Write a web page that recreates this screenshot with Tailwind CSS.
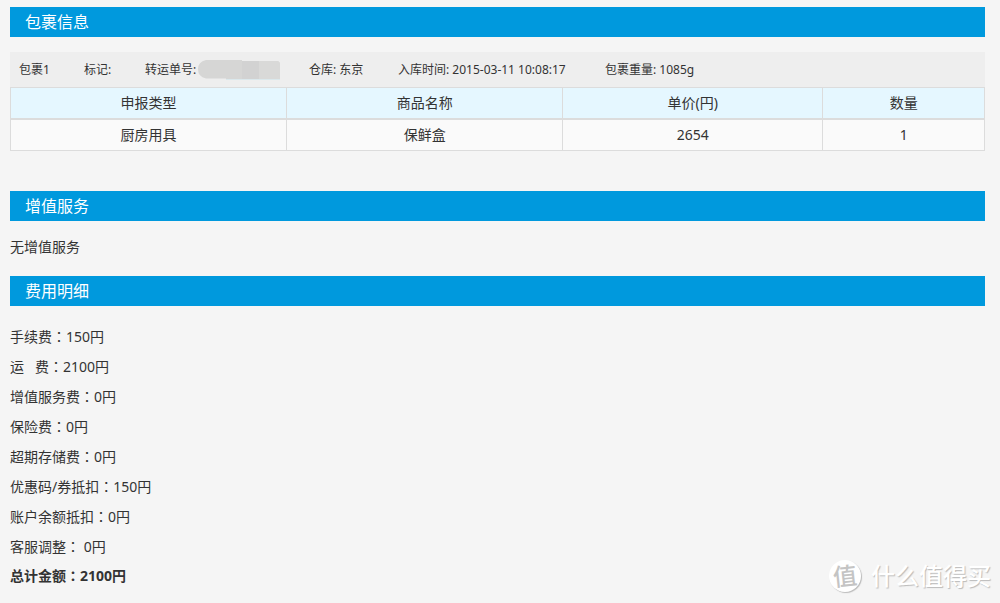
<!DOCTYPE html>
<html lang="zh-CN">
<head>
<meta charset="utf-8">
<meta name="viewport" content="width=device-width, initial-scale=1">
<title>包裹信息</title>
<script src="https://cdn.jsdelivr.net/npm/@tailwindcss/browser@4"></script>
</head>
<body class="relative min-h-screen bg-[#f5f5f5] pt-[7px] pr-[15px] pl-[10px] font-['Noto_Sans','Noto_Sans_CJK_SC',sans-serif] text-sm text-[#333]">
<main>
  <section>
    <h2 class="h-[30px] bg-[#0099dd] pl-[15px] text-base leading-[30px] text-white">包裹信息</h2>
    <div class="mt-[15px] flex h-[35px] items-center bg-[#eee] pl-[9px] text-xs whitespace-nowrap">
      <span class="w-[65px]">包裹1</span>
      <span class="w-[61px]">标记:</span>
      <span class="flex w-[164px] items-center">转运单号:
        <svg class="ml-[2px] h-[21px] w-[83px]" viewBox="0 0 83 21" aria-hidden="true"><path d="M8 1H44V2H80L82 4V20H28V19.500H8Q0 18 0 10Q0 3 8 1Z" fill="#d6d6d5"/><path d="M44 2h17v18H44z" fill="#d2d2d2"/><path d="M61 2h19l2 2v16H61z" fill="#d9d9d8"/><path d="M28 20.500H82" stroke="#dbe8ec"/></svg>
      </span>
      <span class="w-[89px]">仓库: 东京</span>
      <span class="w-[207px]">入库时间: 2015-03-11 10:08:17</span>
      <span>包裹重量: 1085g</span>
    </div>
    <table class="w-full table-fixed border-collapse border border-[#dcdcdc] text-center">
      <colgroup><col class="w-[28.35%]"><col class="w-[28.35%]"><col class="w-[26.7%]"><col></colgroup>
      <thead>
        <tr class="h-[31px] border-b-2 border-[#dcdcdc] bg-[#e5f7ff]">
          <th class="border-r border-[#dcdcdc] font-normal">申报类型</th>
          <th class="border-r border-[#dcdcdc] font-normal">商品名称</th>
          <th class="border-r border-[#dcdcdc] font-normal">单价(円)</th>
          <th class="font-normal">数量</th>
        </tr>
      </thead>
      <tbody>
        <tr class="h-8 bg-[#fafafa]">
          <td class="border-r border-[#dcdcdc]">厨房用具</td>
          <td class="border-r border-[#dcdcdc]">保鲜盒</td>
          <td class="border-r border-[#dcdcdc]">2654</td>
          <td>1</td>
        </tr>
      </tbody>
    </table>
  </section>
  <section class="mt-10">
    <h2 class="h-[30px] bg-[#0099dd] pl-[15px] text-base leading-[30px] text-white">增值服务</h2>
    <p class="h-[55px] leading-[52px]">无增值服务</p>
  </section>
  <section>
    <h2 class="h-[30px] bg-[#0099dd] pl-[15px] text-base leading-[30px] text-white">费用明细</h2>
    <ul class="mt-[15px] leading-[30px]">
      <li class="h-[30px]">手续费<span lang="zh-TW" class="font-['Noto_Sans_CJK_TC']">：</span>150円</li>
      <li class="h-[30px] whitespace-pre">运   费<span lang="zh-TW" class="font-['Noto_Sans_CJK_TC']">：</span>2100円</li>
      <li class="h-[30px]">增值服务费<span lang="zh-TW" class="font-['Noto_Sans_CJK_TC']">：</span>0円</li>
      <li class="h-[30px]">保险费<span lang="zh-TW" class="font-['Noto_Sans_CJK_TC']">：</span>0円</li>
      <li class="h-[30px]">超期存储费<span lang="zh-TW" class="font-['Noto_Sans_CJK_TC']">：</span>0円</li>
      <li class="h-[30px]">优惠码/券抵扣<span lang="zh-TW" class="font-['Noto_Sans_CJK_TC']">：</span>150円</li>
      <li class="h-[30px]">账户余额抵扣<span lang="zh-TW" class="font-['Noto_Sans_CJK_TC']">：</span>0円</li>
      <li class="h-[30px]">客服调整<span lang="zh-TW" class="font-['Noto_Sans_CJK_TC']">：</span> 0円</li>
      <li class="h-7 leading-7 font-bold">总计金额<span lang="zh-TW" class="font-['Noto_Sans_CJK_TC']">：</span>2100円</li>
    </ul>
  </section>
</main>
<div class="absolute right-[9px] bottom-[11px] flex items-center gap-[10px] text-2xl leading-8 text-white">
  <span class="flex size-8 items-center justify-center rounded-full bg-white font-medium text-[#c4c4c4] shadow-[1px_1px_1px_#bbb]"><span class="-rotate-6">值</span></span>
  <span class="font-medium text-shadow-[1px_1px_1px_#bbb]">什么值得买</span>
</div>
</body>
</html>
